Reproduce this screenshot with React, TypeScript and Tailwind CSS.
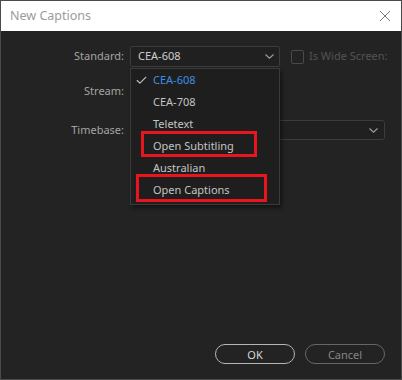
import { Check } from "lucide-react";

const font = { fontFamily: '"Noto Sans", "Open Sans", sans-serif' };

const Chevron = () => (
  <svg width="9" height="5" viewBox="0 0 9 5" className="shrink-0">
    <path d="M0.5 0.5 L4.5 4.2 L8.5 0.5" fill="none" stroke="#9a9a9a" strokeWidth="1.2" />
  </svg>
);

const options = ["CEA-608", "CEA-708", "Teletext", "Open Subtitling", "Australian", "Open Captions"];

export default function App() {
  return (
    <div
      className="relative w-[402px] h-[380px] flex flex-col bg-[#232323] border border-[#4b4b4b] text-[11px]"
      style={font}
    >
      <div className="h-[30px] bg-white flex items-center justify-between pl-[9px] pr-[10px]">
        <span className="text-[12.5px] text-[#9b9b9b]">New Captions</span>
        <svg width="12" height="12" viewBox="0 0 12 12">
          <path d="M1 1 L11 11 M11 1 L1 11" stroke="#7a7a7a" strokeWidth="1" />
        </svg>
      </div>

      <div className="flex-1 flex flex-col pt-[15px]">
        {/* Standard */}
        <div className="flex items-center h-[21px]">
          <span className="w-[123px] text-right text-[#a3a3a3]">Standard:</span>
          <div className="relative ml-[6px] w-[150px] h-[21px]">
            <div className="h-full flex items-center justify-between pl-[7px] pr-[5px] border border-[#3c3c3c] rounded-[2px] bg-[#202020]">
              <span className="text-[#cfcfcf]">CEA-608</span>
              <Chevron />
            </div>
            <div className="absolute left-0 top-[calc(100%+1px)] w-[150px] h-[137px] z-10 bg-[#1e1e1e] border border-[#3a3a3a] shadow-[2px_3px_4px_rgba(0,0,0,0.45)]">
              {options.map((o, i) => (
                <div key={o} className="relative h-[22px] flex items-center pl-[22px]">
                  {i === 0 && (
                    <Check className="absolute left-[4px] top-[5px]" size={13} strokeWidth={2} color="#bdbdbd" />
                  )}
                  <span className={i === 0 ? "text-[#3d8ee0]" : "text-[#c4c4c4]"}>{o}</span>
                </div>
              ))}
              <div className="absolute left-[10px] top-[62px] w-[116px] h-[26px] border-[3px] border-[#e8141e]" />
              <div className="absolute left-[5px] top-[105px] w-[131px] h-[28px] border-[3px] border-[#e8141e]" />
            </div>
          </div>
          <div className="ml-[11px] w-[13px] h-[14px] border border-[#4a4a4a] rounded-[2px]" />
          <span className="ml-[5px] text-[#535353]">Is Wide Screen:</span>
        </div>

        {/* Stream */}
        <div className="flex items-center h-[20px] mt-[14px]">
          <span className="w-[123px] text-right text-[#a3a3a3]">Stream:</span>
        </div>

        {/* Timebase */}
        <div className="flex items-center h-[20px] mt-[19px]">
          <span className="w-[123px] text-right text-[#a3a3a3]">Timebase:</span>
          <div className="ml-[6px] w-[255px] h-[20px] flex items-center justify-end pr-[6px] border border-[#3c3c3c] rounded-[3px] bg-[#202020]">
            <Chevron />
          </div>
        </div>

        <div className="flex-1" />

        <div className="flex justify-end gap-[10px] pr-[16px] pb-[15px]">
          <button className="w-[80px] h-[20px] rounded-full border border-[#b5b5b5] text-[#d8d8d8] leading-none">
            OK
          </button>
          <button className="w-[80px] h-[20px] rounded-full border border-[#666] text-[#858585] leading-none">
            Cancel
          </button>
        </div>
      </div>
    </div>
  );
}
